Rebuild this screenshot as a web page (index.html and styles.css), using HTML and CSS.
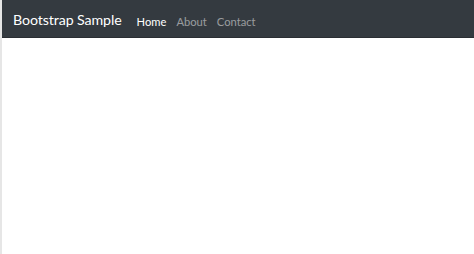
FILE: index.html
```html
<!DOCTYPE html>
<html>
<head>
<meta charset="utf-8">
<link rel="stylesheet" href="styles.css">
</head>
<body>
<div class="frame">
  <nav class="navbar">
    <a class="brand" href="#">Bootstrap Sample</a>
    <ul class="nav">
      <li><a class="link active" href="#">Home</a></li>
      <li><a class="link" href="#">About</a></li>
      <li><a class="link" href="#">Contact</a></li>
    </ul>
  </nav>
  <main class="content"></main>
</div>
</body>
</html>
```
FILE: styles.css
```css
html, body { margin: 0; padding: 0; height: 100%; background: #fff; }
body { font-family: "Lato", "Noto Sans", sans-serif; }
.frame {
  height: 100%;
  border-left: 2px solid #e6e6e6;
  display: flex;
  flex-direction: column;
}
.navbar {
  height: 38px;
  background: #343a40;
  border-bottom: 1px solid #2a2e33;
  display: flex;
  align-items: center;
  padding-left: 11px;
  padding-top: 1px;
  box-sizing: border-box;
}
.brand {
  color: #fff;
  text-decoration: none;
  font-size: 14.2px;
  letter-spacing: -0.1px;
  margin-right: 15px;
}
.nav {
  list-style: none;
  margin: 0;
  padding: 0;
  display: flex;
  gap: 10px;
}
.link {
  color: rgba(255,255,255,0.5);
  text-decoration: none;
  font-size: 11.2px;
}
.link.active { color: #fff; }
.content { flex: 1; }
```
